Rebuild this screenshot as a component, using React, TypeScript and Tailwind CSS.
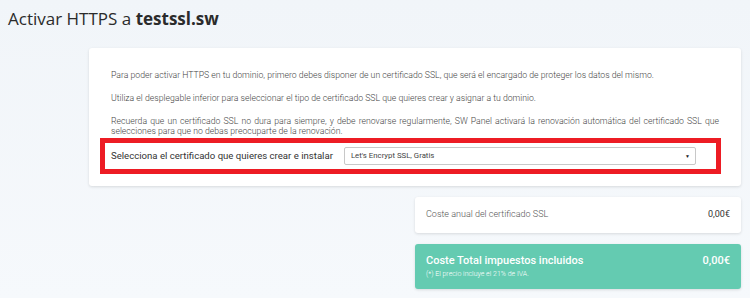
import React from 'react';

const body = "font-['Roboto',sans-serif]";

export default function App() {
  return (
    <div className={`min-h-[298px] w-[750px] bg-gradient-to-b from-[#f1f5f9] to-[#f6f9fc] ${body}`}>
      <h1 className="pl-[8px] pt-[7px] font-['Open_Sans',sans-serif] text-[17px] leading-[24px] text-[#2b2b2b]">
        Activar HTTPS a <span className="font-bold">testssl.sw</span>
      </h1>

      <div className="ml-[89px] mr-[9px] mt-[17px]">
        {/* Main card */}
        <div className="rounded-[3px] bg-white px-[22px] pb-[12px] pt-[23px] shadow-[0_1px_3px_rgba(0,0,0,0.12)]">
          <div className="text-[8.7px] font-light leading-[9.5px] text-[#444]">
            <p>
              Para poder activar HTTPS en tu dominio, primero debes disponer de un certificado SSL, que será el encargado de proteger los datos del mismo.
            </p>
            <p className="mt-[13.5px]">
              Utiliza el desplegable inferior para seleccionar el tipo de certificado SSL que quieres crear y asignar a tu dominio.
            </p>
            <p className="mt-[13.5px] text-justify">
              Recuerda que un certificado SSL no dura para siempre, y debe renovarse regularmente, SW Panel activará la renovación automática del certificado SSL que selecciones para que no debas preocuparte de la renovación.
            </p>
          </div>

          <div className="-ml-[11px] -mr-[2px] mt-[2px] flex h-[36px] items-center border-[5px] border-[#ed1c24] pl-[6px]">
            <span className="whitespace-nowrap text-[9.6px] text-[#333]">Selecciona el certificado que quieres crear e instalar</span>
            <div className="ml-[11px] flex h-[18px] w-[352px] shrink-0 items-center justify-between rounded-[2px] border border-[#c8c8c8] bg-white pl-[6px] pr-[5px] text-[7.8px] text-[#444]">
              <span>Let's Encrypt SSL, Gratis</span>
              <span className="text-[5px] leading-none text-[#222]">▼</span>
            </div>
          </div>
        </div>

        {/* Cost column */}
        <div className="ml-auto mt-[11px] w-[326px]">
          <div className="flex h-[36px] items-center justify-between rounded-[3px] bg-white px-[11px] shadow-[0_1px_3px_rgba(0,0,0,0.12)]">
            <span className="text-[9px] font-light text-[#555]">Coste anual del certificado SSL</span>
            <span className="text-[9px] text-[#333]">0,00€</span>
          </div>
          <div className="mt-[11px] flex h-[45px] flex-col rounded-[3px] bg-[#64cbb1] px-[11px] pt-[10px] text-white shadow-[0_1px_3px_rgba(0,0,0,0.12)]">
            <div className="flex items-center justify-between leading-[13px]">
              <span className="text-[11px] font-medium">Coste Total impuestos incluidos</span>
              <span className="text-[11px] font-medium">0,00€</span>
            </div>
            <span className="mt-[3px] text-[7px] font-light leading-[9px]">(*) El precio incluye el 21% de IVA.</span>
          </div>
        </div>
      </div>
    </div>
  );
}
